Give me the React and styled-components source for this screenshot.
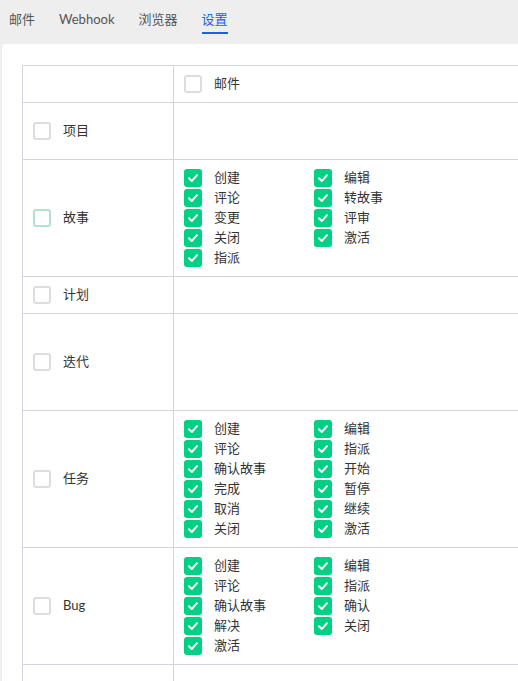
import styled, { createGlobalStyle } from 'styled-components';

const GlobalStyle = createGlobalStyle`
  html, body {
    margin: 0;
    padding: 0;
    background: #eeeeee;
    font-family: "Lato", "Noto Sans CJK SC", sans-serif;
    font-size: 13px;
    color: #333;
  }
`;

const tabs = ['邮件', 'Webhook', '浏览器', '设置'];

const rows = [
  { name: '项目', height: 57, items: [] },
  {
    name: '故事',
    hover: true,
    items: ['创建', '编辑', '评论', '转故事', '变更', '评审', '关闭', '激活', '指派'],
  },
  { name: '计划', height: 37, items: [] },
  { name: '迭代', height: 97, items: [] },
  {
    name: '任务',
    items: ['创建', '编辑', '评论', '指派', '确认故事', '开始', '完成', '暂停', '取消', '继续', '关闭', '激活'],
  },
  {
    name: 'Bug',
    items: ['创建', '编辑', '评论', '指派', '确认故事', '确认', '解决', '关闭', '激活'],
  },
  { name: '', height: 60, items: [] },
];

const Check = ({ checked, hover }) => (
  <Box $checked={checked} $hover={hover}>
    {checked && (
      <svg width="12" height="12" viewBox="0 0 12 12">
        <path d="M2 6.2 L4.8 9 L10 3.2" fill="none" stroke="#fff" strokeWidth="2" strokeLinecap="round" strokeLinejoin="round" />
      </svg>
    )}
  </Box>
);

const App = () => {
  return (
    <Page>
      <GlobalStyle />
      <Tabs>
        {tabs.map((t, i) => (
          <Tab key={t} $active={i === 3}>
            {t}
          </Tab>
        ))}
      </Tabs>
      <Panel>
        <Table>
          <Row $h={37}>
            <NameCell />
            <ContentCell>
              <Option>
                <Check />
                <OptionLabel>邮件</OptionLabel>
              </Option>
            </ContentCell>
          </Row>
          {rows.map((r, i) => (
            <Row key={i} $h={r.height}>
              <NameCell>
                {r.name && (
                  <>
                    <Check hover={r.hover} />
                    <Label>{r.name}</Label>
                  </>
                )}
              </NameCell>
              <ContentCell>
                {r.items.length > 0 && (
                  <OptionGrid>
                    {r.items.map((it, j) => (
                      <Option key={j}>
                        <Check checked />
                        <OptionLabel>{it}</OptionLabel>
                      </Option>
                    ))}
                  </OptionGrid>
                )}
              </ContentCell>
            </Row>
          ))}
        </Table>
      </Panel>
    </Page>
  );
};

export default App;

const Page = styled.div`
  width: 518px;
  height: 681px;
  overflow: hidden;
  display: flex;
  flex-direction: column;
`;

const Tabs = styled.div`
  height: 44px;
  display: flex;
  align-items: flex-start;
  gap: 24px;
  padding-left: 9px;
  box-sizing: border-box;
`;

const Tab = styled.div`
  font-size: 13px;
  line-height: 18px;
  padding-top: 10px;
  padding-bottom: 4px;
  color: ${(p) => (p.$active ? '#1463e6' : '#555')};
  border-bottom: 2px solid ${(p) => (p.$active ? '#1463e6' : 'transparent')};
`;

const Panel = styled.div`
  flex: 1;
  margin-left: 2px;
  background: #fff;
  border-radius: 4px 0 0 0;
  padding: 21px 0 0 20px;
  overflow: hidden;
`;

const Table = styled.div`
  width: 700px;
  border-top: 1px solid #d4d4de;
  border-left: 1px solid #d4d4de;
`;

const Row = styled.div`
  display: flex;
  box-sizing: border-box;
  border-bottom: 1px solid #d4d4de;
  min-height: ${(p) => (p.$h ? `${p.$h}px` : 'auto')};
`;

const NameCell = styled.div`
  width: 151px;
  box-sizing: border-box;
  border-right: 1px solid #d4d4de;
  padding-left: 10px;
  display: flex;
  align-items: center;
`;

const ContentCell = styled.div`
  flex: 1;
  padding: 8px 10px;
  display: flex;
  align-items: center;
`;

const OptionGrid = styled.div`
  display: grid;
  grid-template-columns: 130px 130px;
`;

const Option = styled.div`
  height: 20px;
  display: flex;
  align-items: center;
`;

const Box = styled.div`
  width: 18px;
  height: 18px;
  box-sizing: border-box;
  border-radius: 3px;
  display: flex;
  align-items: center;
  justify-content: center;
  flex-shrink: 0;
  background: ${(p) => (p.$checked ? '#00d084' : '#fff')};
  border: ${(p) =>
    p.$checked ? 'none' : `2px solid ${p.$hover ? '#b5e0cd' : '#dddddd'}`};
`;

const Label = styled.span`
  margin-left: 12px;
  font-size: 13px;
  line-height: 18px;
  margin-top: -2px;
  color: #333;
`;

const OptionLabel = styled.span`
  margin-left: 12px;
  font-size: 13px;
  line-height: 18px;
  margin-top: -2px;
  color: #333;
`;
